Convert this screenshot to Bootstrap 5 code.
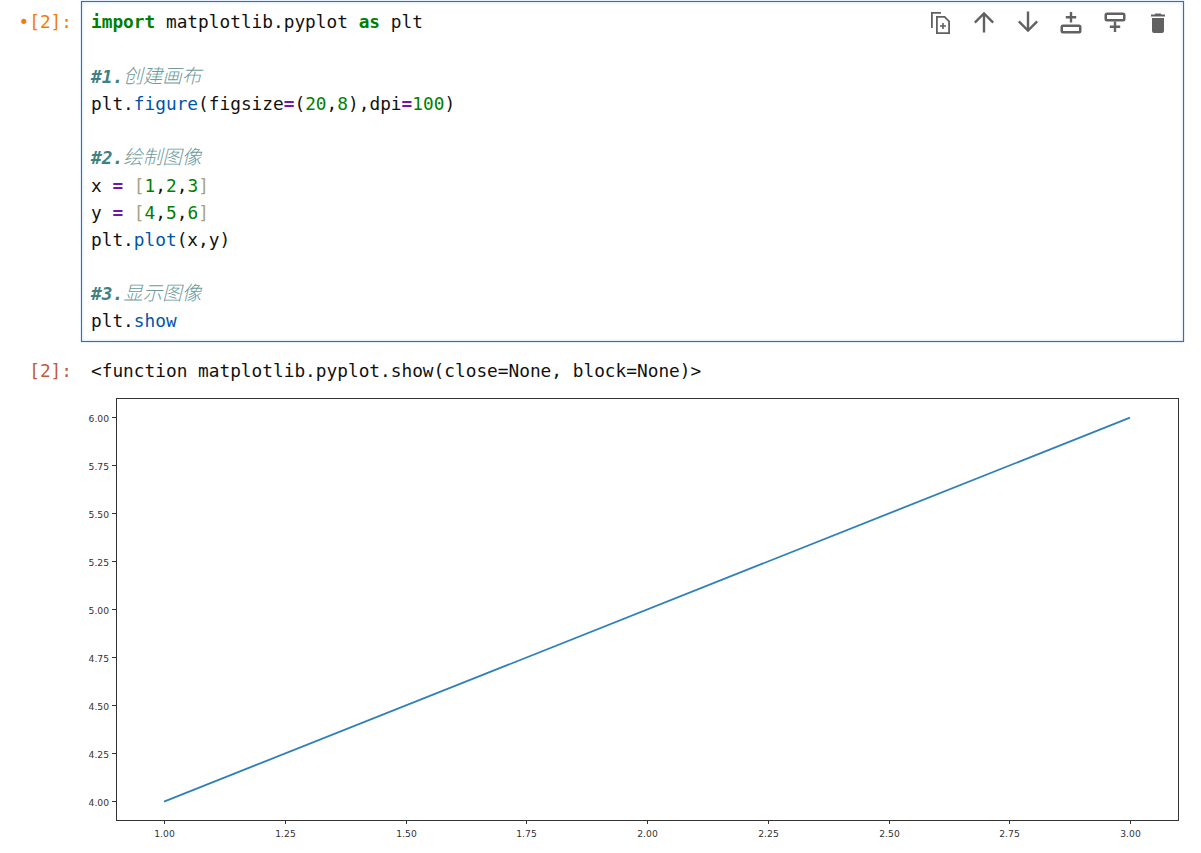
<!DOCTYPE html>
<html lang="en">
<head>
    <meta charset="UTF-8">
    <meta name="viewport" content="width=device-width, initial-scale=1.0">
    <title>Notebook</title>
    <link href="https://cdn.jsdelivr.net/npm/bootstrap@5.3.0/dist/css/bootstrap.min.css" rel="stylesheet">
    <style>
        body {
            background-color: #fff;
            padding-top: 1px;
            font-family: "DejaVu Sans Mono", "Noto Sans CJK SC", monospace;
            font-size: 17.8px;
            color: #111;
        }
        .prompt-col {
            width: 81px;
            flex: none;
            text-align: right;
            padding-right: 9px;
            line-height: 27.2px;
        }
        .prompt-in { color: #f57c00; padding-top: 7px; }
        .prompt-out { color: #bf5b3d; }
        .code-cell {
            position: relative;
            width: 1103px;
            height: 341px;
            border: 1px solid #1976d2;
            box-shadow: inset 0 0 3px rgba(25, 118, 210, .3), 0 0 1px rgba(25, 118, 210, .7);
            padding: 6.4px 9px;
        }
        .code-line {
            height: 27.2px;
            line-height: 27.2px;
            white-space: pre;
        }
        .cell-tools {
            position: absolute;
            top: 8px;
            right: 13px;
            gap: 19.4px;
        }
        .cell-tools svg { display: block; width: 24px; height: 24px; fill: #616161; }
        .kw { color: #008000; font-weight: bold; }
        .op { color: #7216ab; font-weight: bold; }
        .num { color: #008000; }
        .fn { color: #0055aa; }
        .br { color: #a8a27f; }
        .cm { color: #408080; font-style: italic; font-weight: bold; }
        .cjk {
            font-family: "Noto Sans CJK SC", sans-serif;
            font-size: 19.5px;
            font-weight: 300;
            line-height: 0;
            color: #6f9a9a;
        }
        .output-row { margin-top: 15px; }
        .output-text { padding-left: 10px; line-height: 27.2px; white-space: pre; }
        .plot-wrap { margin-top: 14px; }
        .plot-wrap svg { display: block; }
        .plot-wrap text {
            font-family: "DejaVu Sans", sans-serif;
            font-size: 9.2px;
            fill: #333;
        }
    </style>
</head>
<body>
    <div class="d-flex">
        <div class="prompt-col prompt-in">&bull;[2]:</div>
        <div class="code-cell">
            <div class="code-line"><span class="kw">import</span> matplotlib.pyplot <span class="kw">as</span> plt</div>
            <div class="code-line"></div>
            <div class="code-line"><span class="cm">#1.</span><span class="cm cjk">创建画布</span></div>
            <div class="code-line">plt.<span class="fn">figure</span>(figsize<span class="op">=</span>(<span class="num">20</span>,<span class="num">8</span>),dpi<span class="op">=</span><span class="num">100</span>)</div>
            <div class="code-line"></div>
            <div class="code-line"><span class="cm">#2.</span><span class="cm cjk">绘制图像</span></div>
            <div class="code-line">x <span class="op">=</span> <span class="br">[</span><span class="num">1</span>,<span class="num">2</span>,<span class="num">3</span><span class="br">]</span></div>
            <div class="code-line">y <span class="op">=</span> <span class="br">[</span><span class="num">4</span>,<span class="num">5</span>,<span class="num">6</span><span class="br">]</span></div>
            <div class="code-line">plt.<span class="fn">plot</span>(x,y)</div>
            <div class="code-line"></div>
            <div class="code-line"><span class="cm">#3.</span><span class="cm cjk">显示图像</span></div>
            <div class="code-line">plt.<span class="fn">show</span></div>

            <div class="cell-tools d-flex">
                <!-- duplicate -->
                <svg viewBox="0 0 24 24"><path d="M2 2h10v1.800H3.800V18H2z"/><path fill-rule="evenodd" d="M7 6h9l5 5v13H7zm1.800 1.800v14.400h10.400V11.800l-4-4z"/><path d="M13.200 13h1.600v2.200H17v1.600h-2.200V19h-1.600v-2.200H11v-1.600h2.200z"/></svg>
                <!-- move up -->
                <svg viewBox="0 0 24 24"><path d="M10.800 22.500V6.300L3.700 13.400 2 11.700 12 1.800l10 9.900-1.700 1.700-7.100-7.100v16.200z"/></svg>
                <!-- move down -->
                <svg viewBox="0 0 24 24"><path d="M10.800 1.500v16.200l-7.100-7.100L2 12.300l10 9.900 10-9.900-1.700-1.700-7.100 7.100V1.500z"/></svg>
                <!-- add above -->
                <svg viewBox="0 0 24 24"><path d="M10.800 2h2.400v4h4v2.400h-4v4h-2.400v-4h-4V6h4z"/><path fill-rule="evenodd" d="M4 14.500h16a2.500 2.500 0 0 1 2.500 2.500v4a2.500 2.500 0 0 1-2.500 2.500H4A2.500 2.500 0 0 1 1.500 21v-4A2.500 2.500 0 0 1 4 14.500zm0 2.400v4.200h16v-4.200z"/></svg>
                <!-- add below -->
                <svg viewBox="0 0 24 24"><path fill-rule="evenodd" d="M4 2.500h16A2.500 2.500 0 0 1 22.500 5v4a2.500 2.500 0 0 1-2.500 2.500H4A2.500 2.500 0 0 1 1.500 9V5A2.500 2.500 0 0 1 4 2.500zm0 2.400v4.200h16V4.900z"/><path d="M10.800 11.500h2.400v4h4v2.400h-4v4h-2.400v-4h-4v-2.400h4z"/></svg>
                <!-- delete -->
                <svg viewBox="0 0 24 24"><path d="M6 21a2 2 0 0 0 2 2h8a2 2 0 0 0 2-2V8H6zM19 4.500h-3.500l-1-1h-5l-1 1H5v2h14z"/></svg>
            </div>
        </div>
    </div>

    <div class="d-flex output-row">
        <div class="prompt-col prompt-out">[2]:</div>
        <div class="output-text">&lt;function matplotlib.pyplot.show(close=None, block=None)&gt;</div>
    </div>

    <div class="plot-wrap">
        <svg id="plot" width="1201" height="440" xmlns="http://www.w3.org/2000/svg"></svg>
    </div>

    <script>
        // Draw the figure from its tick values
        const plot = document.getElementById('plot');
        const NS = 'http://www.w3.org/2000/svg';
        const axLeft = 116, axRight = 1178, axTop = 399, axBottom = 821;
        const xPos = v => 164 + (v - 1) * 483;
        const yPos = v => 802.6 - (v - 4) * 192 - axTop;

        function add(tag, attrs, text) {
            const el = document.createElementNS(NS, tag);
            Object.entries(attrs).forEach(([k, v]) => el.setAttribute(k, v));
            if (text) el.textContent = text;
            plot.appendChild(el);
        }

        const boxH = axBottom - axTop;
        for (let v = 1; v <= 3; v += 0.25) {
            const x = Math.round(xPos(v)) + .5;
            add('line', {x1: x, x2: x, y1: boxH, y2: boxH + 4, stroke: '#333'});
            add('text', {x: x, y: boxH + 17, 'text-anchor': 'middle'}, v.toFixed(2));
        }
        for (let v = 4; v <= 6; v += 0.25) {
            const y = Math.floor(yPos(v)) + .5;
            add('line', {x1: axLeft - 4, x2: axLeft, y1: y, y2: y, stroke: '#333'});
            add('text', {x: axLeft - 7, y: y + 4, 'text-anchor': 'end'}, v.toFixed(2));
        }
        add('polyline', {points: `${xPos(1)},${yPos(4)} ${xPos(3)},${yPos(6)}`, fill: 'none', stroke: '#2f7fb8', 'stroke-width': 1.8});
        add('rect', {x: axLeft + .5, y: .5, width: axRight - axLeft, height: boxH, fill: 'none', stroke: '#333'});
    </script>
    <script src="https://cdn.jsdelivr.net/npm/bootstrap@5.3.0/dist/js/bootstrap.bundle.min.js"></script>
</body>
</html>
